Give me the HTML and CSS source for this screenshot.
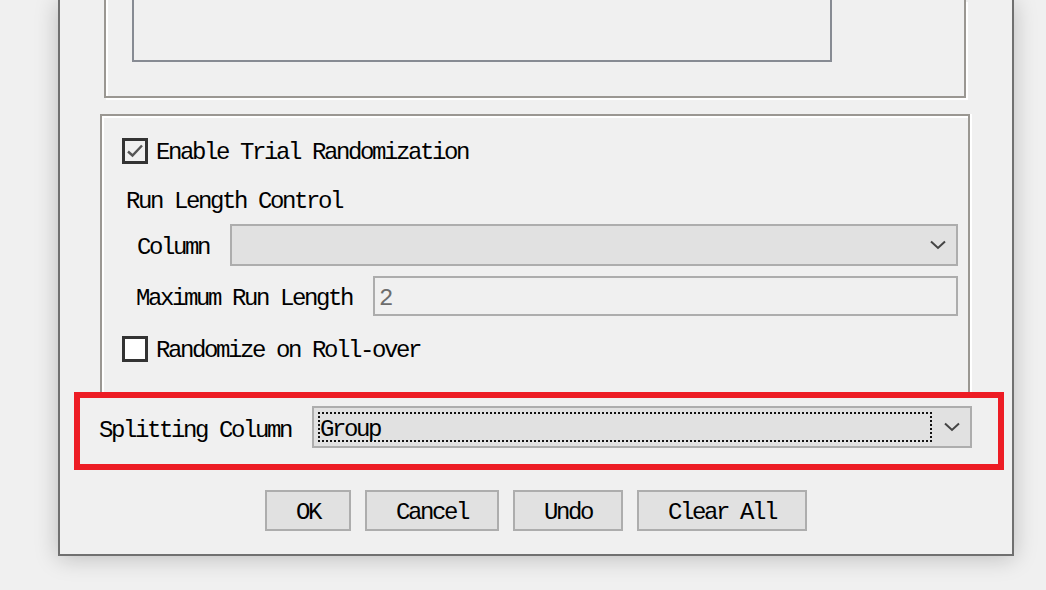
FILE: index.html
```html
<!DOCTYPE html>
<html>
<head>
<meta charset="utf-8">
<link rel="stylesheet" href="styles.css">
</head>
<body>
<div class="dialog">
  <div class="frame frame-top">
    <div class="listbox"></div>
  </div>
  <div class="frame frame-rand">
    <div class="check-row row-enable">
      <span class="checkbox checked"><svg viewBox="0 0 20 20" width="20" height="20"><path d="M3 10.5 L7.5 14.5 L17 4.5" fill="none" stroke="#555" stroke-width="2.4"/></svg></span>
      <span class="check-label">Enable Trial Randomization</span>
    </div>
    <div class="section-title">Run Length Control</div>
    <div class="field-row row-column">
      <span class="field-label">Column</span>
      <div class="combo column-combo">
        <span class="combo-text"></span>
        <svg class="chevron" viewBox="0 0 16 10" width="16" height="10"><path d="M1 1.5 L8 8 L15 1.5" fill="none" stroke="#444" stroke-width="2"/></svg>
      </div>
    </div>
    <div class="field-row row-max">
      <span class="field-label">Maximum Run Length</span>
      <div class="textbox"><span class="text-shift">2</span></div>
    </div>
    <div class="check-row row-rollover">
      <span class="checkbox"></span>
      <span class="check-label">Randomize on Roll-over</span>
    </div>
  </div>
  <div class="highlight">
    <span class="split-label">Splitting Column</span>
    <div class="combo split-combo">
      <span class="focus-rect"><span class="text-shift">Group</span></span>
      <svg class="chevron" viewBox="0 0 16 10" width="16" height="10"><path d="M1 1.5 L8 8 L15 1.5" fill="none" stroke="#444" stroke-width="2"/></svg>
    </div>
  </div>
  <div class="buttons">
    <div class="btn btn-ok"><span class="text-shift">OK</span></div>
    <div class="btn btn-cancel"><span class="text-shift">Cancel</span></div>
    <div class="btn btn-undo"><span class="text-shift">Undo</span></div>
    <div class="btn btn-clear"><span class="text-shift">Clear All</span></div>
  </div>
</div>
</body>
</html>
```
FILE: styles.css
```css
html, body {
  margin: 0;
  padding: 0;
}
body {
  background: #f0f0f0;
  width: 1046px;
  height: 590px;
  overflow: hidden;
  font-family: "Liberation Mono", "Courier New", monospace;
  font-size: 24px;
  letter-spacing: -2.4px;
  color: #000;
}
.dialog {
  box-sizing: border-box;
  margin-left: 58px;
  width: 956px;
  height: 556px;
  background: #f0f0f0;
  border: 2px solid #707070;
  border-top: none;
  box-shadow: 0 2px 22px rgba(0, 0, 0, 0.22);
  display: flex;
  flex-direction: column;
}
.frame {
  box-sizing: border-box;
  border: 2px solid #9a9792;
}
.frame-top {
  margin-left: 44px;
  width: 862px;
  height: 98px;
  border-top: none;
  box-shadow: inset 2px 0 0 #fff, 2px 2px 0 #fff;
}
.listbox {
  box-sizing: border-box;
  margin-left: 26px;
  width: 700px;
  height: 62px;
  border: 2px solid #878b93;
  border-top: none;
}
.frame-rand {
  margin-top: 16px;
  margin-left: 40px;
  width: 870px;
  height: 278px;
  border-bottom: none;
  box-shadow: inset 2px 2px 0 #fff, 2px 0 0 #fff;
  padding: 22px 10px 0 20px;
}
.check-row {
  display: flex;
  align-items: center;
  height: 26px;
}
.checkbox {
  box-sizing: border-box;
  width: 26px;
  height: 26px;
  border: 3px solid #333;
  background: #fff;
  display: flex;
  align-items: center;
  justify-content: center;
  flex: none;
}
.checkbox.checked {
  background: #f0f0f0;
}
.check-label {
  margin-left: 8px;
  line-height: 26px;
  padding-top: 4px;
}
.text-shift {
  padding-top: 4px;
}
.section-title {
  margin-top: 23px;
  margin-left: 4px;
  line-height: 26px;
  height: 26px;
  padding-top: 2px;
}
.field-row {
  display: flex;
  align-items: center;
  gap: 21px;
}
.field-label {
  padding-top: 4px;
}
.row-column {
  margin-top: 9px;
  padding-left: 15px;
}
.row-max {
  margin-top: 10px;
  padding-left: 14px;
}
.combo {
  box-sizing: border-box;
  height: 42px;
  background: #e1e1e1;
  border: 2px solid #adadad;
  display: flex;
  align-items: center;
}
.column-combo {
  flex: 1;
  justify-content: flex-end;
  padding-right: 10px;
}
.chevron {
  display: block;
  flex: none;
}
.textbox {
  box-sizing: border-box;
  flex: 1;
  height: 40px;
  border: 2px solid #adadad;
  background: #f0f0f0;
  color: #6d6d6d;
  padding-left: 4px;
  display: flex;
  align-items: center;
}
.row-rollover {
  margin-top: 20px;
}
.highlight {
  box-sizing: border-box;
  margin-left: 14px;
  width: 930px;
  height: 78px;
  border: 6px solid #ed1c24;
  display: flex;
  align-items: flex-start;
  padding: 8px 0 0 19px;
}
.split-label {
  line-height: 42px;
  width: 213px;
  flex: none;
  padding-top: 4px;
}
.split-combo {
  width: 660px;
  padding: 0 10px 0 4px;
  justify-content: space-between;
}
.focus-rect {
  box-sizing: border-box;
  width: 614px;
  height: 30px;
  border: 2px dotted #111;
  display: flex;
  align-items: center;
}
.buttons {
  margin-top: 20px;
  display: flex;
  justify-content: center;
  gap: 14px;
}
.btn {
  box-sizing: border-box;
  height: 41px;
  border: 2px solid #adadad;
  background: #e1e1e1;
  display: flex;
  align-items: center;
  justify-content: center;
}
.btn-ok { width: 86px; }
.btn-cancel { width: 134px; }
.btn-undo { width: 110px; }
.btn-clear { width: 170px; }
```
